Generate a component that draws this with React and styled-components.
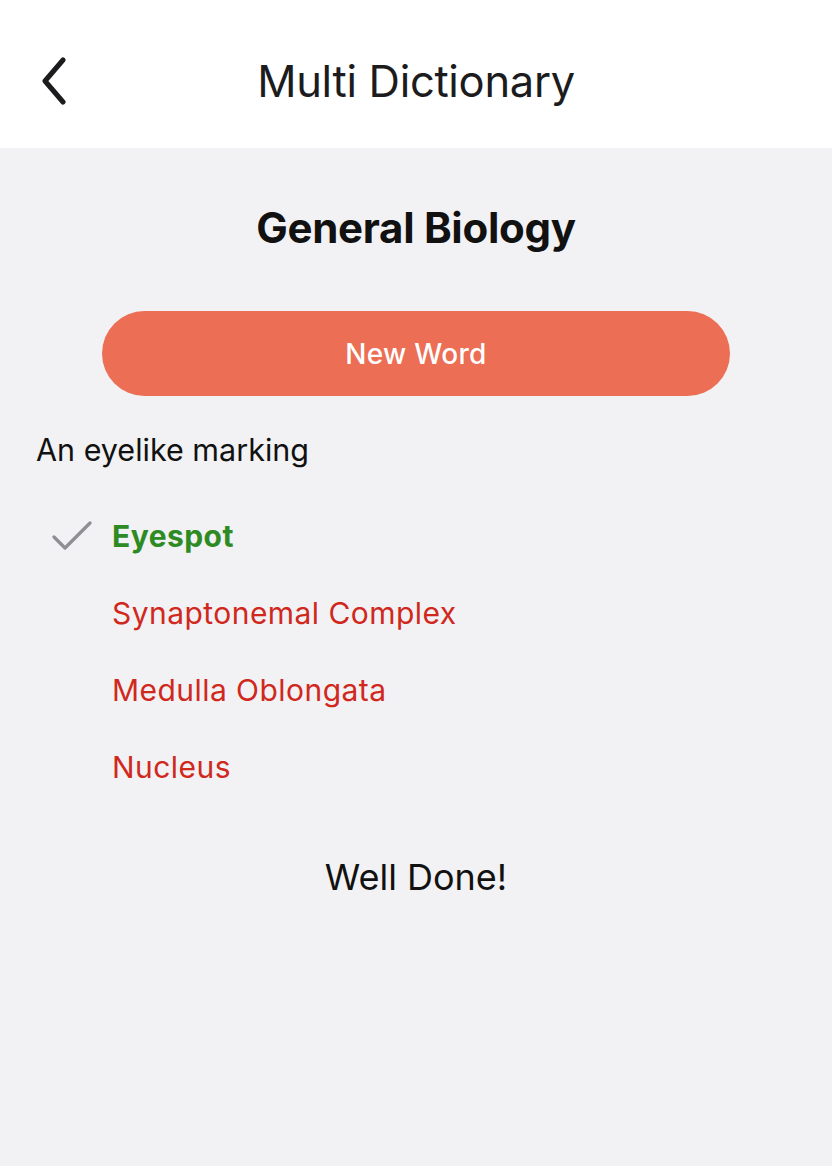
import React from "react";
import styled, { createGlobalStyle } from "styled-components";

const Global = createGlobalStyle`
  html, body { margin: 0; padding: 0; background: #f2f1f4; }
  body { font-family: Inter, "Noto Sans", sans-serif; -webkit-font-smoothing: antialiased; }
`;

const Screen = styled.div`
  width: 832px;
  min-height: 1166px;
  background: #f2f1f4;
  display: flex;
  flex-direction: column;
`;

const NavBar = styled.header`
  height: 148px;
  background: #ffffff;
  display: grid;
  grid-template-columns: 120px 1fr 120px;
  align-items: center;
  padding-top: 14px;
  box-sizing: border-box;
`;

const BackButton = styled.button`
  border: 0;
  background: none;
  padding: 0 0 0 41px;
  display: flex;
  align-items: center;
  cursor: pointer;
`;

const NavTitle = styled.h1`
  margin: 0;
  text-align: center;
  font-size: 43.5px;
  font-weight: 400;
  color: #1c1c1e;
  letter-spacing: -0.3px;
`;

const Content = styled.main`
  display: flex;
  flex-direction: column;
  align-items: center;
  padding-top: 54px;
`;

const Heading = styled.h2`
  margin: 0;
  font-size: 42px;
  font-weight: 700;
  color: #111;
  letter-spacing: -0.3px;
`;

const PrimaryButton = styled.button`
  margin-top: 58px;
  width: 628px;
  height: 85px;
  border: 0;
  border-radius: 43px;
  background: #ec6e55;
  color: #fff;
  font-family: inherit;
  font-size: 28px;
  font-weight: 500;
  letter-spacing: 0.3px;
  cursor: pointer;
`;

const Definition = styled.p`
  align-self: stretch;
  margin: 35px 0 0;
  padding-left: 36px;
  font-size: 30.5px;
  color: #111;
`;

const Options = styled.ul`
  align-self: stretch;
  list-style: none;
  margin: 29px 0 0;
  padding: 0;
  display: flex;
  flex-direction: column;
`;

const Option = styled.li`
  height: 77px;
  display: grid;
  grid-template-columns: 112px 1fr;
  align-items: center;
  font-size: 30px;
  letter-spacing: 0.45px;
  font-weight: ${(p) => (p.$correct ? 700 : 400)};
  color: ${(p) => (p.$correct ? "#2e8b24" : "#d0281c")};
`;

const CheckCell = styled.span`
  display: flex;
  justify-content: flex-end;
  padding-right: 20px;
`;

const Result = styled.p`
  margin: 50px 0 0;
  font-size: 36px;
  color: #111;
`;

const Chevron = () => (
  <svg width="26" height="48" viewBox="0 0 26 48" fill="none">
    <path d="M22 3 L4 24 L22 45" stroke="#1c1c1e" strokeWidth="5" strokeLinecap="round" strokeLinejoin="round" />
  </svg>
);

const Check = () => (
  <svg width="40" height="30" viewBox="0 0 40 30" fill="none">
    <path d="M2 16 L13 27 L38 2" stroke="#8e8e93" strokeWidth="3.2" strokeLinecap="round" strokeLinejoin="round" />
  </svg>
);

const options = [
  { word: "Eyespot", correct: true },
  { word: "Synaptonemal Complex" },
  { word: "Medulla Oblongata" },
  { word: "Nucleus" },
];

export default function App() {
  return (
    <Screen>
      <Global />
      <NavBar>
        <BackButton aria-label="Back"><Chevron /></BackButton>
        <NavTitle>Multi Dictionary</NavTitle>
        <span />
      </NavBar>
      <Content>
        <Heading>General Biology</Heading>
        <PrimaryButton>New Word</PrimaryButton>
        <Definition>An eyelike marking</Definition>
        <Options>
          {options.map((o) => (
            <Option key={o.word} $correct={o.correct}>
              <CheckCell>{o.correct && <Check />}</CheckCell>
              <span>{o.word}</span>
            </Option>
          ))}
        </Options>
        <Result>Well Done!</Result>
      </Content>
    </Screen>
  );
}
